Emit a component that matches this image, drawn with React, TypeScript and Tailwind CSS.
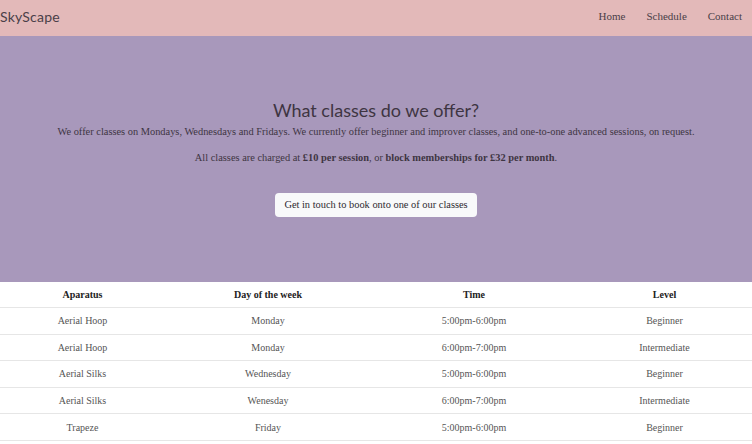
import React from "react";

const rows = [
  ["Aerial Hoop", "Monday", "5:00pm-6:00pm", "Beginner"],
  ["Aerial Hoop", "Monday", "6:00pm-7:00pm", "Intermediate"],
  ["Aerial Silks", "Wednesday", "5:00pm-6:00pm", "Beginner"],
  ["Aerial Silks", "Wenesday", "6:00pm-7:00pm", "Intermediate"],
  ["Trapeze", "Friday", "5:00pm-6:00pm", "Beginner"],
];

const serif = { fontFamily: '"Liberation Serif", "DejaVu Serif", serif' };

export default function App() {
  return (
    <div className="w-[752px] min-h-[444px] bg-white" style={serif}>
      <nav className="h-[36px] bg-[#e3b9b9] flex items-center justify-between pr-[10px] pb-[4px]">
        <div className="text-[14px] text-[#4a3f48] tracking-[0.2px]" style={{ fontFamily: '"Lato", "Noto Sans", sans-serif' }}>SkyScape</div>
        <div className="flex gap-[21px] text-[11px] text-[#4a3f48]">
          <span>Home</span>
          <span>Schedule</span>
          <span>Contact</span>
        </div>
      </nav>
      <section className="h-[246px] bg-[#a898bb] flex flex-col items-center pt-[64px] text-[#3e3542]">
        <h1 className="text-[18px] leading-[20px]" style={{ fontFamily: '"Lato", "Noto Sans", sans-serif' }}>What classes do we offer?</h1>
        <p className="text-[10.4px] leading-[13px] mt-[5px]">We offer classes on Mondays, Wednesdays and Fridays. We currently offer beginner and improver classes, and one-to-one advanced sessions, on request.</p>
        <p className="text-[10.4px] leading-[13px] mt-[13px]">All classes are charged at <b>£10 per session</b>, or <b>block memberships for £32 per month</b>.</p>
        <button className="mt-[29px] h-[24px] px-[9px] bg-[#f8f9fa] rounded-[4px] text-[10.4px] text-[#2e2a30]">Get in touch to book onto one of our classes</button>
      </section>
      <div className="text-[10px]">
        <div className="grid grid-cols-[165px_206px_206px_175px] h-[26px] items-center border-b border-[#e6e6e6] text-[#222] font-bold text-center">
          <div>Aparatus</div>
          <div>Day of the week</div>
          <div>Time</div>
          <div>Level</div>
        </div>
        {rows.map((r, i) => (
          <div key={i} className="grid grid-cols-[165px_206px_206px_175px] h-[26.6px] items-center border-b border-[#e6e6e6] text-[#555] text-center">
            {r.map((c, j) => (
              <div key={j}>{c}</div>
            ))}
          </div>
        ))}
      </div>
    </div>
  );
}
